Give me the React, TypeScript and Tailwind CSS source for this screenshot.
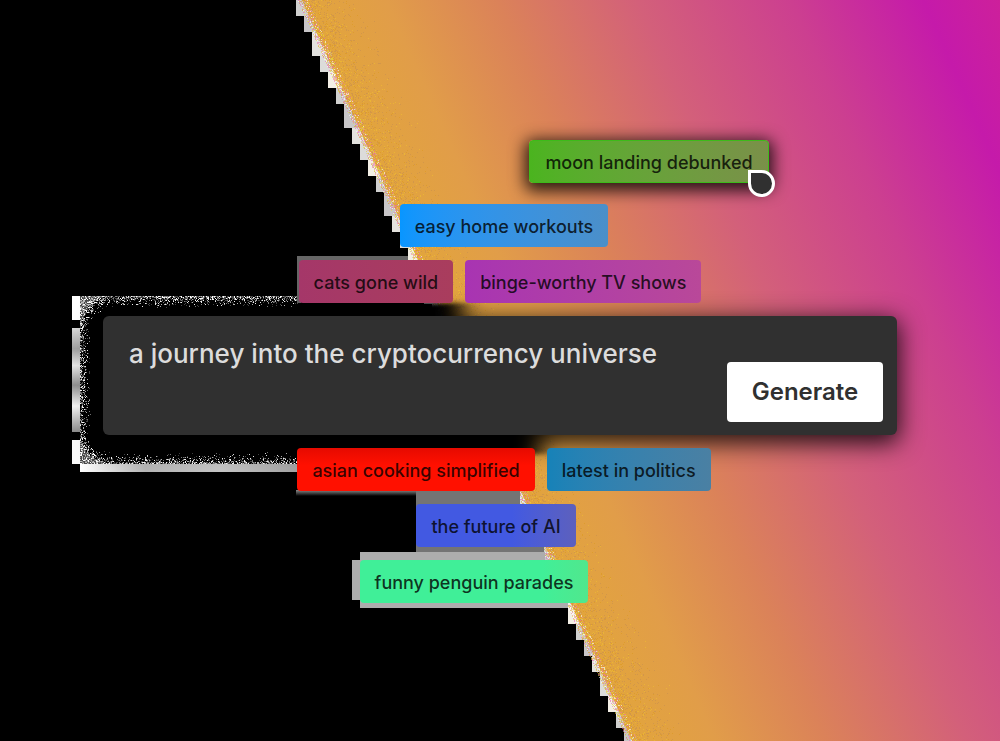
import React from "react";

type Speckles = { color: string; d: string };

// Small seeded generator so the grain is identical on every render.
function createRandom(seed: number) {
  let s = seed;
  return () => {
    s = (s * 1664525 + 1013904223) % 4294967296;
    return s / 4294967296;
  };
}

const EDGE_SLOPE = 0.445;
const edgeX = (y: number) => 302 + y * EDGE_SLOPE;
const GRAYS = ["#d0d0cf", "#e4e3df", "#f3efe6", "#c8c6c8", "#dcdcda"];

const steps = Array.from({ length: 42 }, (_, i) => {
  const y = Math.round((i * 17.75) / 8) * 8;
  const next = Math.round(((i + 1) * 17.75) / 8) * 8;
  return { x: 296 + i * 8, y, h: next - y, fill: GRAYS[(i * 3) % 5] };
});

function buildEdgeGrain(): Speckles[] {
  const random = createRandom(17);
  const colors = ["#f0c030", "#dc9a20", "#ef86a0", "#ffffff", "#c89050", "#c9b9ae", "#e766b8", "#e7e23c"];
  const paths = colors.map(() => "");
  for (let y = 0; y < 742; y++) {
    const start = edgeX(y) - 4;
    for (let k = 0; k < 70; k++) {
      const near = k < 10;
      const fade = 1 - k / 70;
      const density = near ? 0.65 : 0.4 * fade * fade;
      if (random() > density) continue;
      const pick = near ? Math.floor(random() * 8) : [0, 1, 4, 4][Math.floor(random() * 4)];
      paths[pick] += `M${Math.round(start + k)} ${y}h1v1h-1z`;
    }
  }
  return colors.map((color, i) => ({ color, d: paths[i] }));
}

function buildHaloGrain(): Speckles[] {
  const random = createRandom(5);
  const colors = ["#ffffff", "#bdbdbd", "#858585", "#4a4a4a"];
  const paths = colors.map(() => "");
  for (let y = 296; y < 464; y++) {
    for (let x = 80; x < 300; x++) {
      const dx = Math.max(0, 113 - x);
      const dy = Math.max(0, 330 - y, y - 430);
      const light = (Math.hypot(dx, dy) - 21) / 14;
      if (light <= 0 || random() > light * light) continue;
      const tone = Math.min(3, Math.floor(random() * 5));
      paths[tone] += `M${x} ${y}h1v1h-1z`;
    }
  }
  return colors.map((color, i) => ({ color, d: paths[i] }));
}

const edgeGrain = buildEdgeGrain();
const haloGrain = buildHaloGrain();

function Backdrop() {
  return (
    <svg
      className="absolute inset-0 h-full w-full"
      viewBox="0 0 1000 741"
      preserveAspectRatio="xMidYMid slice"
      aria-hidden="true"
    >
      <defs>
        <linearGradient id="sunset" gradientUnits="userSpaceOnUse" x1="302" y1="0" x2="885" y2="-259">
          <stop offset="0" stopColor="#e2a53c" />
          <stop offset="0.12" stopColor="#e19d49" />
          <stop offset="0.28" stopColor="#db8259" />
          <stop offset="0.48" stopColor="#d3607a" />
          <stop offset="0.7" stopColor="#cc3f90" />
          <stop offset="0.89" stopColor="#c51aaa" />
          <stop offset="1" stopColor="#cd209b" />
        </linearGradient>
        <linearGradient id="halo-side" x1="0" y1="0" x2="0" y2="1">
          <stop offset="0" stopColor="#d8d8d8" />
          <stop offset="0.2" stopColor="#a0a0a0" />
          <stop offset="0.36" stopColor="#e6e6e6" />
          <stop offset="0.55" stopColor="#8f8f8f" />
          <stop offset="0.75" stopColor="#f4f4f4" />
          <stop offset="1" stopColor="#8c8c8c" />
        </linearGradient>
        <linearGradient id="halo-base" x1="0" y1="0" x2="1" y2="0">
          <stop offset="0" stopColor="#ffffff" />
          <stop offset="0.3" stopColor="#b5b5b5" />
          <stop offset="0.65" stopColor="#c5c5c5" />
          <stop offset="1" stopColor="#a2a2a2" />
        </linearGradient>
        <linearGradient id="fade-down" x1="0" y1="0" x2="0" y2="1">
          <stop offset="0" stopColor="#8a8a8a" />
          <stop offset="1" stopColor="#000000" />
        </linearGradient>
        <filter id="soften" x="-20%" y="-60%" width="140%" height="220%">
          <feGaussianBlur stdDeviation="12 2" />
        </filter>
      </defs>
      <rect width="1000" height="741" fill="#000" />
      <g shapeRendering="crispEdges">
        {steps.map((s) => (
          <rect key={s.x} x={s.x} y={s.y} width="20" height={s.h} fill={s.fill} />
        ))}
      </g>
      <path d="M302 0H1000V741H632Z" fill="url(#sunset)" />
      <g shapeRendering="crispEdges">
        {edgeGrain.map((g) => (
          <path key={g.color} d={g.d} fill={g.color} opacity="0.6" />
        ))}
      </g>
      <path d="M330 303H462V330H330Z M330 420H540V454H330Z" fill="#000" filter="url(#soften)" />
      <g shapeRendering="crispEdges">
        <rect x="72" y="296" width="8" height="24" fill="#fff" />
        <rect x="72" y="328" width="8" height="104" fill="url(#halo-side)" />
        <rect x="72" y="440" width="8" height="24" fill="#fafafa" />
        <rect x="80" y="464" width="218" height="8" fill="url(#halo-base)" />
        {haloGrain.map((g) => (
          <path key={g.color} d={g.d} fill={g.color} />
        ))}
        <path d="M297 256H408V264H301V303H297Z" fill="#666" />
        <rect x="296" y="490" width="120" height="6" fill="url(#fade-down)" />
        <path d="M416 490H520V504H544V552H416Z" fill="#747474" />
        <path d="M360 552H545V560H568V608H360V600H352V560H360Z" fill="#adadad" />
      </g>
    </svg>
  );
}

function Chip({ label, tone }: { label: string; tone: string }) {
  return (
    <button
      type="button"
      className={`relative z-10 flex h-[43px] items-center whitespace-nowrap rounded px-[15px] pt-px text-[18px] font-medium text-black/80 ${tone}`}
    >
      {label}
    </button>
  );
}

export default function App() {
  return (
    <main className="relative flex min-h-screen flex-col items-center justify-center gap-[13px] overflow-hidden bg-black px-6 pt-0.5 font-['Inter',sans-serif] [font-optical-sizing:none]">
      <Backdrop />

      <div className="mb-2 flex justify-center pl-[298px]">
        <div className="relative">
          <Chip
            label="moon landing debunked"
            tone="border border-[#3dbb1a] bg-linear-to-r from-[#4bb41f] to-[#7a9049] shadow-[0_4px_16px_4px_rgba(0,0,0,0.8)]"
          />
          <span className="absolute -right-1.5 -bottom-3.5 z-20 size-[27px] rounded-full rounded-tl-none border-3 border-white bg-[#303030]" />
        </div>
      </div>

      <div className="flex justify-center pl-2">
        <Chip label="easy home workouts" tone="bg-linear-to-r from-[#0896ff] to-[#4b8fc9]" />
      </div>

      <div className="flex justify-center gap-3">
        <Chip label="cats gone wild" tone="bg-linear-to-r from-[#a53769] to-[#a93d5d]" />
        <Chip label="binge-worthy TV shows" tone="bg-linear-to-r from-[#a834b2] to-[#b94899]" />
      </div>

      <form
        onSubmit={(e) => e.preventDefault()}
        className="relative flex h-[119px] w-full max-w-[794px] items-end rounded-md bg-[#303030] pr-3.5 pb-[13px] shadow-[0_6px_24px_2px_rgba(0,0,0,0.85)]"
      >
        <textarea
          aria-label="Topic"
          defaultValue="a journey into the cryptocurrency universe"
          className="h-[106px] min-w-0 flex-1 resize-none bg-transparent pt-5 pl-[26px] text-[26px] leading-9 font-medium text-[#dcdcdc] outline-none"
        />
        <button
          type="submit"
          className="h-[60px] w-[156px] shrink-0 rounded bg-white text-2xl font-semibold text-[#303030]"
        >
          Generate
        </button>
      </form>

      <div className="flex justify-center gap-3 pl-2">
        <Chip label="asian cooking simplified" tone="bg-linear-to-b from-[#e60a00] to-[#ff1000] to-40%" />
        <Chip label="latest in politics" tone="bg-linear-to-r from-[#1682b8] to-[#4a80a3]" />
      </div>

      <div className="flex justify-center pr-2">
        <Chip label="the future of AI" tone="bg-linear-to-r from-[#4259e2] from-60% to-[#5d60bd]" />
      </div>

      <div className="flex justify-center pr-[52px]">
        <Chip label="funny penguin parades" tone="bg-linear-to-r from-[#40ef98] from-80% to-[#50e78d]" />
      </div>
    </main>
  );
}
